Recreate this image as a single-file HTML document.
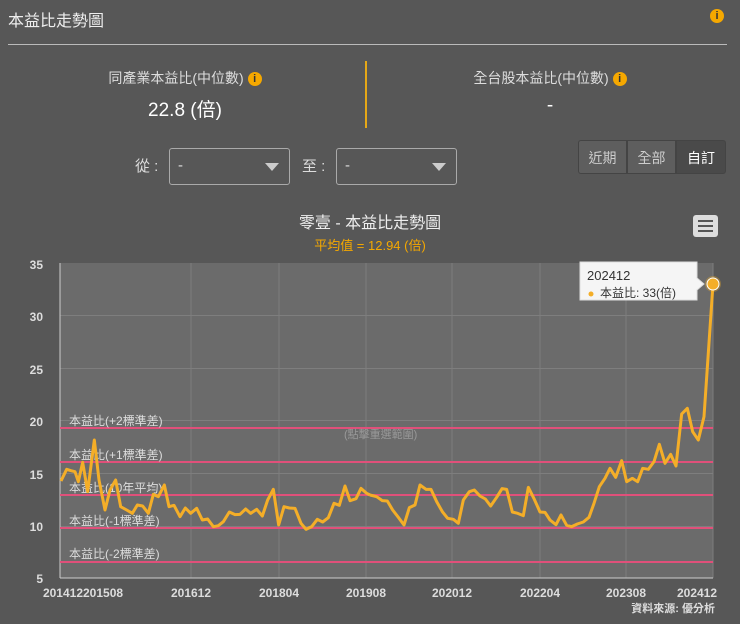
<!DOCTYPE html>
<html><head><meta charset="utf-8"><style>
body{margin:0;width:740px;height:624px;background:#575757;font-family:"Liberation Sans","Noto Sans CJK TC",sans-serif;color:#eee;position:relative;overflow:hidden}
.a{position:absolute}
.info{position:absolute;width:14px;height:14px;border-radius:50%;background:#f5a800;color:#333;font-size:11px;font-weight:bold;text-align:center;line-height:14px}
.sel{position:absolute;top:148px;width:121px;height:37px;border:1px solid #aaa;border-radius:3px;box-sizing:border-box;color:#ddd;font-size:15px;padding:8px 0 0 8px}
.sel:after{content:"";position:absolute;right:10px;top:14px;border-left:7px solid transparent;border-right:7px solid transparent;border-top:8px solid #ccc}
.btn{position:absolute;top:140px;height:34px;width:49px;text-align:center;line-height:34px;font-size:14px;color:#ccc;background:#5e5e5e;border:1px solid #444;box-sizing:border-box}
</style></head><body>
<div class="a" style="left:8px;top:7px;font-size:16px;color:#eee">本益比走勢圖</div>
<div class="info" style="left:710px;top:9px">i</div>
<div class="a" style="left:8px;top:44px;width:719px;height:1px;background:#bbb"></div>
<div class="a" style="left:0;top:68px;width:370px;text-align:center;font-size:14px;color:#ddd">同產業本益比(中位數) <span class="info" style="position:relative;display:inline-block;top:-1px">i</span></div>
<div class="a" style="left:0;top:95px;width:370px;text-align:center;font-size:19px;color:#fff">22.8 (倍)</div>
<div class="a" style="left:365px;top:61px;width:2px;height:67px;background:#e6a817"></div>
<div class="a" style="left:365px;top:68px;width:370px;text-align:center;font-size:14px;color:#ddd">全台股本益比(中位數) <span class="info" style="position:relative;display:inline-block;top:-1px">i</span></div>
<div class="a" style="left:365px;top:95px;width:370px;text-align:center;font-size:19px;color:#fff">-</div>
<div class="a" style="left:135px;top:155px;font-size:15px;color:#ddd">從 :</div>
<div class="sel" style="left:169px">-</div>
<div class="a" style="left:302px;top:155px;font-size:15px;color:#ddd">至 :</div>
<div class="sel" style="left:336px">-</div>
<div class="btn" style="left:578px;border-radius:3px 0 0 3px">近期</div>
<div class="btn" style="left:627px">全部</div>
<div class="btn" style="left:676px;width:50px;background:#4a4a4a;color:#fff;border-radius:0 3px 3px 0">自訂</div>
<div class="a" style="left:0;top:209px;width:740px;text-align:center;font-size:16px;color:#eee">零壹 - 本益比走勢圖</div>
<div class="a" style="left:0;top:235px;width:740px;text-align:center;font-size:13px;color:#f5a800">平均值 = 12.94 (倍)</div>
<div class="a" style="left:693px;top:215px;width:25px;height:22px;background:#ddd;border-radius:3px"></div>
<div class="a" style="left:698px;top:220px;width:15px;height:2px;background:#555;box-shadow:0 5px 0 #555,0 10px 0 #555"></div>
<svg class="a" style="left:0;top:0" width="740" height="624" font-family="Liberation Sans,Noto Sans CJK TC,sans-serif">
<rect x="60" y="263" width="653" height="315" fill="#6b6b6b"/>
<g stroke="#7e7e7e" stroke-width="1">
<line x1="60" x2="713" y1="526.5" y2="526.5"/><line x1="60" x2="713" y1="473.5" y2="473.5"/><line x1="60" x2="713" y1="420.5" y2="420.5"/><line x1="60" x2="713" y1="368.5" y2="368.5"/><line x1="60" x2="713" y1="315.5" y2="315.5"/>
<line x1="191" x2="191" y1="263" y2="578"/><line x1="279" x2="279" y1="263" y2="578"/><line x1="366" x2="366" y1="263" y2="578"/><line x1="452" x2="452" y1="263" y2="578"/><line x1="540" x2="540" y1="263" y2="578"/><line x1="626" x2="626" y1="263" y2="578"/><line x1="713" x2="713" y1="263" y2="578"/>
</g>
<line x1="60" x2="60" y1="263" y2="578" stroke="#ccc"/><line x1="60" x2="713" y1="578" y2="578" stroke="#ccc"/>
<g stroke="#e0507a" stroke-width="2"><line x1="60" x2="713" y1="428" y2="428"/><line x1="60" x2="713" y1="462" y2="462"/><line x1="60" x2="713" y1="495" y2="495"/><line x1="60" x2="713" y1="528" y2="528"/><line x1="60" x2="713" y1="562" y2="562"/></g>
<g font-size="12" fill="#ddd"><text x="69" y="425">本益比(+2標準差)</text><text x="69" y="459">本益比(+1標準差)</text><text x="69" y="492">本益比(10年平均)</text><text x="69" y="525">本益比(-1標準差)</text><text x="69" y="558">本益比(-2標準差)</text>
<text x="344" y="438" fill="#999" font-size="11">(點擊重選範圍)</text></g>
<g font-size="12" fill="#ddd" font-weight="bold" text-anchor="end"><text x="43" y="269">35</text><text x="43" y="321">30</text><text x="43" y="374">25</text><text x="43" y="426">20</text><text x="43" y="479">15</text><text x="43" y="531">10</text><text x="43" y="583">5</text></g>
<g font-size="12" fill="#ddd" font-weight="bold" text-anchor="middle"><text x="83" y="597">201412201508</text><text x="191" y="597">201612</text><text x="279" y="597">201804</text><text x="366" y="597">201908</text><text x="452" y="597">202012</text><text x="540" y="597">202204</text><text x="626" y="597">202308</text><text x="697" y="597">202412</text></g>
<text x="715" y="612" font-size="11" fill="#ddd" text-anchor="end" font-weight="bold">資料來源: 優分析</text>
<g fill="none" stroke="#f4ae28" stroke-width="9" stroke-linejoin="round">
<polyline transform="translate(0,400) scale(0.33333)" points="183,243 200,208 213,212 225,215 235,245 248,187 263,275 283,120 297,240 315,330 330,270 347,240 362,320 380,330 397,340 412,315 428,318 445,340 460,283 475,290 493,255 507,320 522,316 540,350 556,324 572,340 590,325 607,360 623,357 640,380 655,377 670,365 688,336 705,344 720,343 737,327 752,340 770,328 787,348 803,300 820,268 836,375 852,320 868,324 885,325 903,370 918,388 935,380 952,358 968,366 985,353 1002,310 1018,316 1035,258 1050,302 1068,296 1083,265 1100,280 1110,285"/>
<polyline transform="translate(370,400) scale(0.33333)" points="0,285 20,290 37,302 52,303 68,330 85,352 102,375 118,323 135,315 150,255 168,268 183,268 200,305 217,335 233,355 250,358 265,370 280,300 298,275 313,270 330,288 346,297 362,318 380,292 396,266 410,268 427,336 443,340 460,347 475,262 493,298 510,336 525,337 540,360 558,374 573,345 590,376 605,380 622,372 640,366 657,352 672,310 688,260 705,235 720,205 737,232 755,182 770,245 787,235 803,245 818,205 835,208 852,185 868,133 885,190 902,163 918,198 935,42 952,25 968,95 985,120 1002,50 1029,-348"/>
</g>
<circle cx="713" cy="284" r="8" fill="#f4ae28" opacity="0.35"/>
<circle cx="713" cy="284" r="6" fill="#f4ae28" stroke="#fff" stroke-width="1"/>
<path d="M580 262 H697 V278 L704 284 L697 290 V300 H580 Z" fill="#f5f5f5" stroke="#ddd"/>
<text x="587" y="280" font-size="13" fill="#333">202412</text>
<circle cx="591" cy="294" r="2.5" fill="#f4ae28"/>
<text x="600" y="297" font-size="12" fill="#333">本益比: 33(倍)</text>
</svg>
</body></html>
